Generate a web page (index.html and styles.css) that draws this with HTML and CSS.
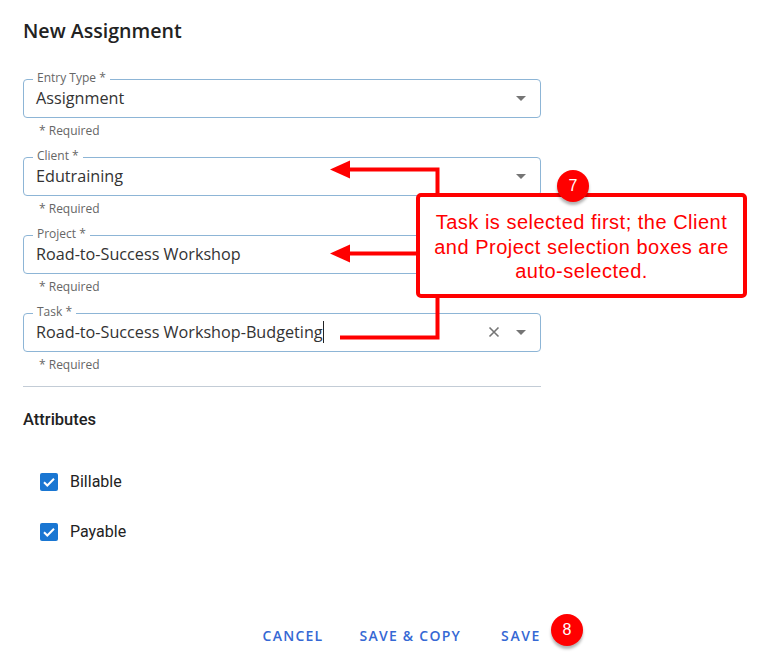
FILE: index.html
```html
<!DOCTYPE html>
<html>
<head>
<meta charset="utf-8">
<title>New Assignment</title>
<link rel="stylesheet" href="styles.css">
</head>
<body>
<div class="page">
  <h1 class="title">New Assignment</h1>
  <form class="form">
    <div class="field">
      <fieldset class="box">
        <legend class="label">Entry Type *</legend>
        <div class="control">
          <span class="value">Assignment</span>
          <svg class="caret" width="10" height="5" viewBox="0 0 10 5"><path d="M0 0h10L5 5z" fill="#757575"/></svg>
        </div>
      </fieldset>
      <div class="helper">* Required</div>
    </div>
    <div class="field">
      <fieldset class="box">
        <legend class="label">Client *</legend>
        <div class="control">
          <span class="value">Edutraining</span>
          <svg class="caret" width="10" height="5" viewBox="0 0 10 5"><path d="M0 0h10L5 5z" fill="#757575"/></svg>
        </div>
      </fieldset>
      <div class="helper">* Required</div>
    </div>
    <div class="field">
      <fieldset class="box">
        <legend class="label">Project *</legend>
        <div class="control">
          <span class="value">Road-to-Success Workshop</span>
          <svg class="caret" width="10" height="5" viewBox="0 0 10 5"><path d="M0 0h10L5 5z" fill="#757575"/></svg>
        </div>
      </fieldset>
      <div class="helper">* Required</div>
    </div>
    <div class="field">
      <fieldset class="box">
        <legend class="label">Task *</legend>
        <div class="control">
          <span class="value"><span class="cursor">Road-to-Success Workshop-Budgeting</span></span>
          <svg class="clear" width="12" height="12" viewBox="0 0 12 12"><path d="M1.5 1.5L10.5 10.5M10.5 1.5L1.5 10.5" stroke="#757575" stroke-width="1.6" fill="none"/></svg>
          <svg class="caret" width="10" height="5" viewBox="0 0 10 5"><path d="M0 0h10L5 5z" fill="#757575"/></svg>
        </div>
      </fieldset>
      <div class="helper">* Required</div>
    </div>
  </form>
  <hr class="divider">
  <h2 class="section">Attributes</h2>
  <div class="checks">
    <label class="check">
      <span class="cb"><svg width="18" height="18" viewBox="0 0 18 18"><path d="M4 9.3L7.3 12.5L14 5.8" stroke="#fff" stroke-width="2" fill="none"/></svg></span>
      <span class="check-text">Billable</span>
    </label>
    <label class="check">
      <span class="cb"><svg width="18" height="18" viewBox="0 0 18 18"><path d="M4 9.3L7.3 12.5L14 5.8" stroke="#fff" stroke-width="2" fill="none"/></svg></span>
      <span class="check-text">Payable</span>
    </label>
  </div>
  <div class="actions">
    <button class="btn" type="button">CANCEL</button>
    <button class="btn" type="button">SAVE &amp; COPY</button>
    <button class="btn btn-save" type="button">SAVE</button>
  </div>
</div>

<div class="annot">
  <svg class="annot-lines" width="760" height="662" viewBox="0 0 760 662">
    <g fill="none" stroke="#ff0000" stroke-width="4">
      <path d="M350 169.5H437.5V337.5H340"/>
      <path d="M350 253.5H418"/>
    </g>
    <g fill="#ff0000">
      <path d="M330 169.5L350 160.5V178.5z"/>
      <path d="M330 253.5L350 244.5V262.5z"/>
    </g>
  </svg>
  <div class="callout">Task is selected first; the Client<br>and Project selection boxes are<br>auto-selected.</div>
  <div class="badge badge-7">7</div>
  <div class="badge badge-8">8</div>
</div>
</body>
</html>
```

FILE: styles.css
```css
* { box-sizing: border-box; }

html, body {
  margin: 0;
  padding: 0;
  background: #ffffff;
}

body {
  width: 760px;
  height: 662px;
  overflow: hidden;
  position: relative;
  font-family: "Open Sans", "Liberation Sans", sans-serif;
}

.page {
  padding: 0 23px;
  width: 564px;
}

.title {
  margin: 17px 0 0;
  font-size: 19.6px;
  line-height: 28px;
  font-weight: 600;
  color: #222222;
}

.form {
  margin-top: 24px;
  width: 518px;
}

.box {
  margin: 0;
  padding: 0 12px 8px;
  min-width: 0;
  border: 1px solid #8db5d6;
  border-radius: 4px;
}

.label {
  margin-left: -3px;
  padding: 3px 4px 5px;
  font-size: 12px;
  line-height: 12px;
  color: #666666;
}

.control {
  display: flex;
  align-items: center;
  height: 22px;
  margin-top: -2px;
}

.value {
  flex: 1;
  font-size: 16.2px;
  line-height: 22px;
  color: #333333;
  white-space: nowrap;
}

.cursor {
  border-right: 1px solid #222;
}

.clear {
  margin-right: 16px;
}

.caret {
  margin-right: 2px;
}

.helper {
  margin: 5px 0 8px 16px;
  font-size: 12px;
  line-height: 16px;
  color: #666666;
}

.divider {
  margin: 13px 0 0;
  width: 518px;
  border: 0;
  border-top: 1px solid #c3ccd6;
  height: 0;
}

.section {
  margin: 23px 0 0;
  font-family: Roboto, "Liberation Sans", sans-serif;
  font-size: 16.5px;
  line-height: 20px;
  font-weight: 500;
  color: #222222;
}

.checks {
  margin-top: 42px;
  padding-left: 17px;
  display: flex;
  flex-direction: column;
  gap: 30px;
}

.check {
  display: flex;
  align-items: center;
  height: 20px;
  gap: 12px;
  font-family: Roboto, "Liberation Sans", sans-serif;
  font-size: 16px;
  line-height: 20px;
  color: #222222;
}

.cb {
  width: 18px;
  height: 18px;
  border-radius: 2px;
  background: #1976d2;
  display: block;
}

.cb svg { display: block; }

.actions {
  margin-top: 86px;
  width: 518px;
  display: flex;
  justify-content: flex-end;
  gap: 36px;
}

.btn {
  margin: 0;
  padding: 0;
  border: 0;
  background: none;
  font-family: "Open Sans", "Liberation Sans", sans-serif;
  font-size: 14px;
  line-height: 16px;
  font-weight: 600;
  letter-spacing: 1.25px;
  color: #3568d4;
}

.btn-save {
  margin-left: 4px;
  letter-spacing: 1.6px;
}

.annot {
  position: absolute;
  left: 0;
  top: 0;
  width: 760px;
  height: 662px;
  pointer-events: none;
}

.annot-lines {
  position: absolute;
  left: 0;
  top: 0;
}

.callout {
  position: absolute;
  left: 416px;
  top: 193px;
  width: 331px;
  height: 105px;
  padding-top: 13px;
  border: 4px solid #ff0000;
  border-radius: 5px;
  background: #ffffff;
  font-family: "Liberation Sans", Arial, sans-serif;
  font-size: 20px;
  letter-spacing: 0.5px;
  line-height: 24.5px;
  color: #ff0000;
  text-align: center;
  white-space: nowrap;
}

.badge {
  position: absolute;
  width: 32px;
  height: 32px;
  border-radius: 50%;
  background: #ff0000;
  color: #ffffff;
  font-family: "Liberation Sans", Arial, sans-serif;
  font-size: 16px;
  line-height: 32px;
  text-align: center;
  box-shadow: 0 3px 3px rgba(0, 0, 0, 0.3);
}

.badge-7 {
  left: 557px;
  top: 170px;
}

.badge-8 {
  left: 551px;
  top: 614px;
}
```
